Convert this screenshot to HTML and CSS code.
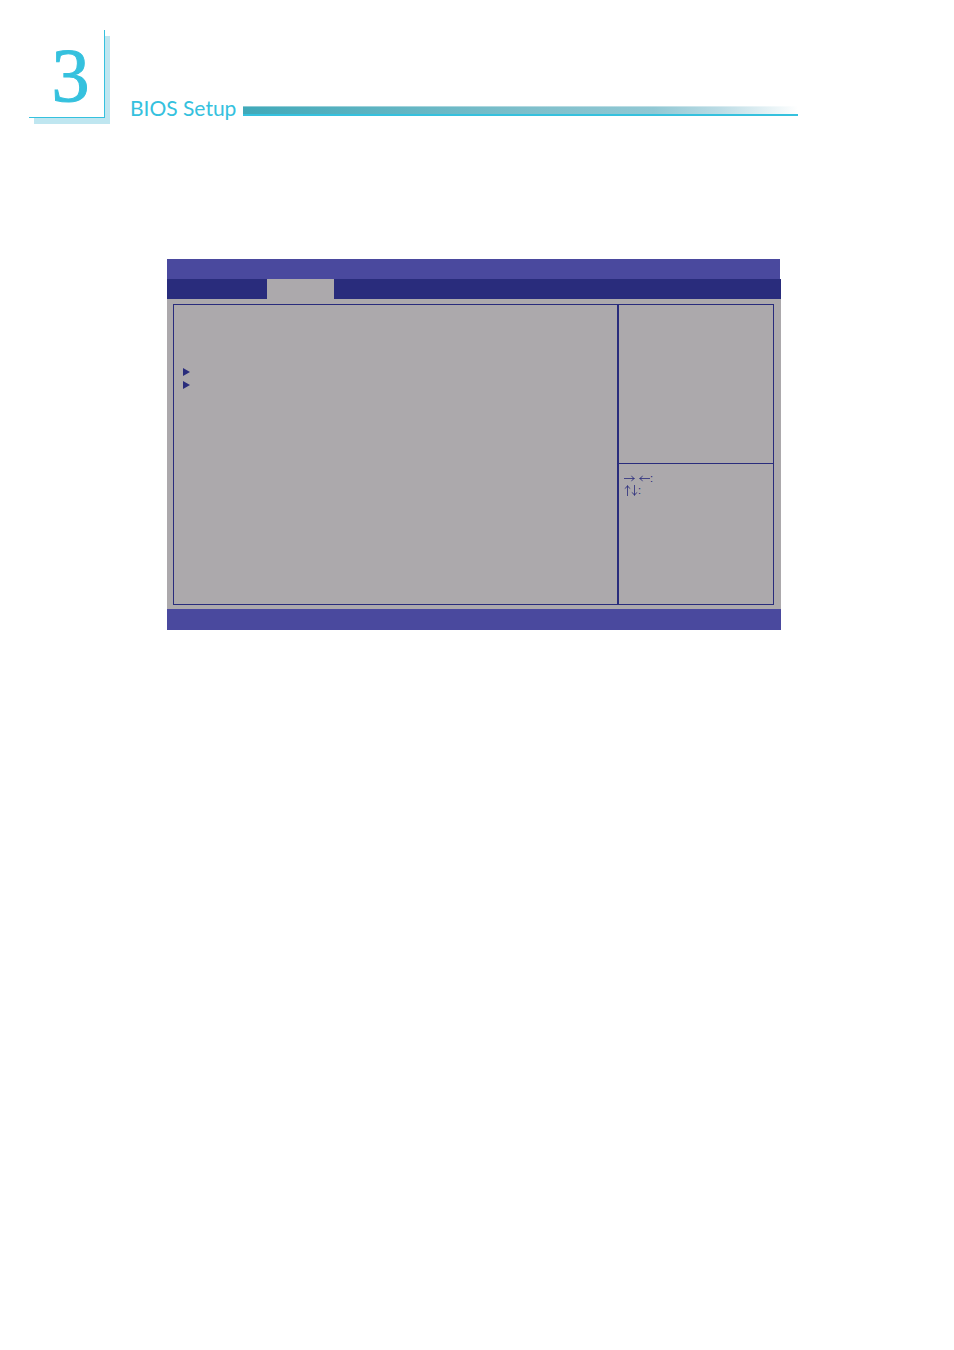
FILE: index.html
```html
<!DOCTYPE html>
<html lang="en">
<head>
    <meta charset="UTF-8">
    <meta name="viewport" content="width=device-width, initial-scale=1.0">
    <title>BIOS Setup</title>
    <link rel="stylesheet" href="styles.css">
</head>
<body>

    <header class="page-header">
        <div class="chapter">3</div>
        <h1>BIOS Setup</h1>
        <div class="rule"></div>
    </header>

    <main class="bios">
        <div class="title-bar"></div>
        <div class="menu-bar">
            <div class="active-tab"></div>
        </div>
        <div class="screen">
            <div class="frame">
                <ul class="options">
                    <li><svg width="7" height="8" viewBox="0 0 7 8"><path d="M0 0L7 4L0 8Z"/></svg></li>
                    <li><svg width="7" height="8" viewBox="0 0 7 8"><path d="M0 0L7 4L0 8Z"/></svg></li>
                </ul>
                <div class="side">
                    <div class="help"></div>
                    <div class="keys">
                        <div class="key-row wide">
                            <svg width="11" height="7" viewBox="0 0 11 7"><path d="M0 3.5H10M7.5 .8Q8.3 2.8 10.5 3.5Q8.3 4.2 7.5 6.2"/></svg>
                            <svg width="11" height="7" viewBox="0 0 11 7"><path d="M11 3.5H1M3.5 .8Q2.7 2.8 .5 3.5Q2.7 4.2 3.5 6.2"/></svg><span>:</span>
                        </div>
                        <div class="key-row">
                            <svg width="7" height="11" viewBox="0 0 7 11"><path d="M3.5 11V1M.8 3.5Q2.8 2.7 3.5 .5Q4.2 2.7 6.2 3.5"/></svg>
                            <svg width="7" height="11" viewBox="0 0 7 11"><path d="M3.5 0V10M.8 7.5Q2.8 8.3 3.5 10.5Q4.2 8.3 6.2 7.5"/></svg><span>:</span>
                        </div>
                    </div>
                </div>
            </div>
        </div>
        <div class="status-bar"></div>
    </main>

</body>
</html>
```

FILE: styles.css
```css
body {
    margin: 0;
    background: #fff;
    font-family: "Liberation Serif", serif;
}

.page-header {
    display: flex;
    align-items: flex-end;
    margin: 30px 156px 0 29px;
    color: #35c1de;
}

.chapter {
    box-sizing: border-box;
    width: 76px;
    height: 88px;
    padding-left: 8px;
    border-right: 1px solid #35c1de;
    border-bottom: 1px solid #35c1de;
    background: #fff;
    box-shadow: 5px 6px #bfe6f0;
    font-size: 76px;
    line-height: 90px;
    text-align: center;
    -webkit-text-stroke: 1px #35c1de;
}

h1 {
    margin: 0 7px 0 25px;
    font-family: Lato, sans-serif;
    font-size: 21px;
    font-weight: 400;
    line-height: 20px;
    white-space: nowrap;
}

.rule {
    flex: 1;
    height: 8px;
    margin-bottom: 2px;
    border-bottom: 2px solid #35c1de;
    background: linear-gradient(to right, #40a9b9, #80c0cc 53%, #91c8d4 74%, #bcdce5 86%, #fff);
    box-shadow: inset 0 1px rgba(255, 255, 255, 0.4);
}

.bios {
    margin: 141px 173px 0 167px;
}

.title-bar {
    height: 20px;
    margin-right: 1px;
    background: #4a499e;
}

.menu-bar {
    height: 20px;
    padding-left: 100px;
    background: #292c7c;
}

.active-tab {
    width: 67px;
    height: 20px;
    background: #aca9ac;
}

.screen {
    padding: 5px 7px 4px 6px;
    background: #aca9ac;
}

.frame {
    display: flex;
    min-height: 299px;
    border: 1px solid #292c7c;
}

.options {
    flex: 1;
    margin: 0;
    padding: 60px 9px 0;
    list-style: none;
}

.options li {
    display: flex;
    align-items: center;
    height: 13px;
}

.options svg {
    fill: #292c7c;
}

.side {
    width: 154px;
    border-left: 2px solid #292c7c;
}

.help {
    height: 158px;
    border-bottom: 1px solid #292c7c;
}

.keys {
    padding: 8px 5px;
    color: #292c7c;
    font-family: "Liberation Sans", sans-serif;
    font-size: 11px;
    line-height: 12px;
}

.key-row {
    display: flex;
    align-items: center;
    height: 12px;
}

.key-row svg {
    fill: none;
    stroke: #292c7c;
    stroke-width: 0.8;
}

.wide svg + svg {
    margin-left: 4px;
}

.status-bar {
    height: 21px;
    background: #4a499e;
}
```
